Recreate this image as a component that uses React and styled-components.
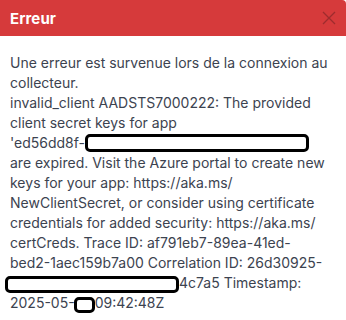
import React from 'react';
import styled, { createGlobalStyle } from 'styled-components';

const Global = createGlobalStyle`
  html, body {
    margin: 0;
    padding: 0;
    background: #ffffff;
  }
`;

const Dialog = styled.div`
  width: 346px;
  height: 320px;
  background: #ffffff;
  font-family: Inter, "Noto Sans", sans-serif;
  overflow: hidden;
`;

const Header = styled.div`
  height: 36px;
  background: #d63a3b;
  border-top-right-radius: 4px;
  display: flex;
  align-items: center;
  justify-content: space-between;
  padding: 0 9px 0 10px;
  box-sizing: border-box;
`;

const Title = styled.span`
  color: #ffffff;
  font-size: 15px;
  font-weight: 700;
  letter-spacing: 0.1px;
`;

const Close = styled.button`
  border: 0;
  background: transparent;
  padding: 0;
  width: 16px;
  height: 16px;
  display: flex;
  align-items: center;
  justify-content: center;
  color: #9e2c2d;
  cursor: pointer;
`;

const Body = styled.div`
  padding: 17px 10px 0 10px;
  color: #3c4350;
  font-size: 14px;
  line-height: 20px;
`;

const Line = styled.div`
  white-space: nowrap;
`;

const Redact = styled.span`
  display: inline-block;
  vertical-align: middle;
  box-sizing: border-box;
  width: ${p => p.w}px;
  height: ${p => p.h}px;
  margin-left: ${p => p.ml || 0}px;
  margin-right: ${p => p.mr || 0}px;
  border: 3px solid #000;
  border-radius: 5px;
  background: #fff;
  position: relative;
  top: ${p => p.dy || 0}px;
`;

const lines = [
  'Une erreur est survenue lors de la connexion au',
  'collecteur.',
  'invalid_client AADSTS7000222: The provided',
  'client secret keys for app',
];

const lines2 = [
  'are expired. Visit the Azure portal to create new',
  'keys for your app: https://aka.ms/',
  'NewClientSecret, or consider using certificate',
  'credentials for added security: https://aka.ms/',
  'certCreds. Trace ID: af791eb7-89ea-41ed-',
  'bed2-1aec159b7a00 Correlation ID: 26d30925-',
];

export default function App() {
  return (
    <>
      <Global />
      <Dialog>
        <Header>
          <Title>Erreur</Title>
          <Close aria-label="Fermer">
            <svg width="14" height="14" viewBox="0 0 14 14" fill="none" stroke="currentColor" strokeWidth="1.3">
              <path d="M1 1 L13 13 M13 1 L1 13" />
            </svg>
          </Close>
        </Header>
        <Body>
          {lines.map(l => <Line key={l}>{l}</Line>)}
          <Line>'ed56dd8f-<Redact w={224} h={18} dy={-1} /></Line>
          {lines2.map(l => <Line key={l}>{l}</Line>)}
          <Line><Redact w={174} h={17} ml={-5} dy={0} />4c7a5 Timestamp:</Line>
          <Line>2025-05-<Redact w={21} h={16} ml={-1} dy={1} />09:42:48Z</Line>
        </Body>
      </Dialog>
    </>
  );
}
